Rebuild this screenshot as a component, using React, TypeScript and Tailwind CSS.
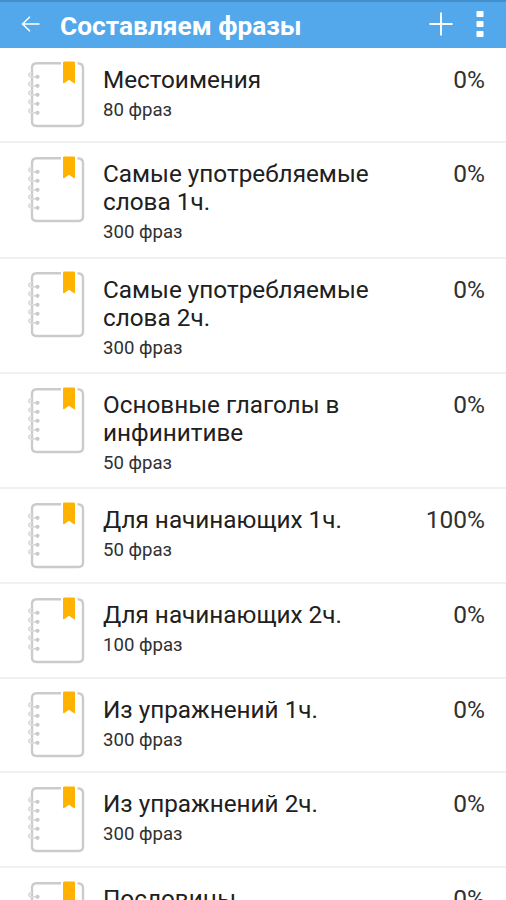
type Lesson = {
  title: string[];
  count: number;
  progress: number;
};

const lessons: Lesson[] = [
  { title: ["Местоимения"], count: 80, progress: 0 },
  { title: ["Самые употребляемые", "слова 1ч."], count: 300, progress: 0 },
  { title: ["Самые употребляемые", "слова 2ч."], count: 300, progress: 0 },
  { title: ["Основные глаголы в", "инфинитиве"], count: 50, progress: 0 },
  { title: ["Для начинающих 1ч."], count: 50, progress: 100 },
  { title: ["Для начинающих 2ч."], count: 100, progress: 0 },
  { title: ["Из упражнений 1ч."], count: 300, progress: 0 },
  { title: ["Из упражнений 2ч."], count: 300, progress: 0 },
  { title: ["Пословицы"], count: 300, progress: 0 },
];

const ringOffsets = [15.8, 24.8, 33.8, 42.8, 51.8];

function NotebookIcon() {
  return (
    <svg viewBox="0 0 60 68" className="h-[68px] w-[60px] shrink-0" fill="none">
      <path
        d="M34 2.2H9.5Q5 2.2 5 7V60.5Q5 65 9.5 65H51.5Q56 65 56 60.5V7Q56 2.2 50.5 2.2"
        stroke="#cbcbcb"
        strokeWidth="2.4"
      />
      {ringOffsets.map((y) => (
        <g key={y}>
          <path d={`M10 ${y}H5Q1.8 ${y} 1.8 ${y - 2}Q1.8 ${y - 4} 5 ${y - 4}`} stroke="#dcdcdc" strokeWidth="1.8" />
          <circle cx="10.5" cy={y} r="2.1" fill="#cbcbcb" />
        </g>
      ))}
      <path d="M36 1.8Q36 .5 37.3 .5H46.7Q48 .5 48 1.8V21.2Q48 22.8 46.6 22L42 18.8L37.4 22Q36 22.8 36 21.2Z" fill="#ffb300" />
    </svg>
  );
}

function Header() {
  return (
    <header className="flex h-12 shrink-0 items-center border-t-2 border-[#438fcb] bg-[#53a8ec] pr-[22px] pl-[21px] text-white">
      <svg viewBox="0 0 20 18" className="mb-0.5 h-[18px] w-5" fill="none" stroke="currentColor" strokeWidth="1.5">
        <path d="M18.5 9H1.5M9 1.8L1.5 9L9 16.2" />
      </svg>
      <h1 className="ml-[19px] flex-1 pt-0.5 text-[26.3px] leading-[30px] font-bold whitespace-nowrap">Составляем фразы</h1>
      <svg viewBox="0 0 24 24" className="mr-[23px] mb-0.5 size-6" stroke="currentColor" strokeWidth="1.9">
        <path d="M12 .5V23.5M.5 12H23.5" />
      </svg>
      <svg viewBox="0 0 8 26" className="mb-0.5 h-[26px] w-2" fill="currentColor">
        <rect x=".5" width="7" height="6" rx=".8" />
        <rect x=".5" y="10" width="7" height="6" rx=".8" />
        <rect x=".5" y="20" width="7" height="6" rx=".8" />
      </svg>
    </header>
  );
}

function LessonRow({ lesson }: { lesson: Lesson }) {
  const height = lesson.title.length > 1 ? "h-[115.3px]" : "h-[94.7px]";

  return (
    <li className={`flex shrink-0 border-b-2 border-[#f1f1f1] pr-[21px] pl-[26.5px] ${height}`}>
      <div className="pt-[12.8px]">
        <NotebookIcon />
      </div>
      <div className="ml-[16.5px] flex-1 pt-[17px]">
        <p className="text-[24.3px] leading-7 whitespace-nowrap text-[#202020]">
          {lesson.title.map((line) => (
            <span key={line} className="block">{line}</span>
          ))}
        </p>
        <p className="mt-1 text-[18.6px] leading-6 text-[#303030]">{lesson.count} фраз</p>
      </div>
      <span className="pt-[17px] text-[24.5px] leading-7 text-[#303030]">{lesson.progress}%</span>
    </li>
  );
}

export default function App() {
  return (
    <div className="flex h-[900px] w-full flex-col overflow-hidden bg-white font-[Roboto,sans-serif]">
      <Header />
      <ul className="flex min-h-0 flex-1 flex-col overflow-hidden pt-[0.6px]">
        {lessons.map((lesson) => (
          <LessonRow key={lesson.title.join(" ")} lesson={lesson} />
        ))}
      </ul>
    </div>
  );
}
